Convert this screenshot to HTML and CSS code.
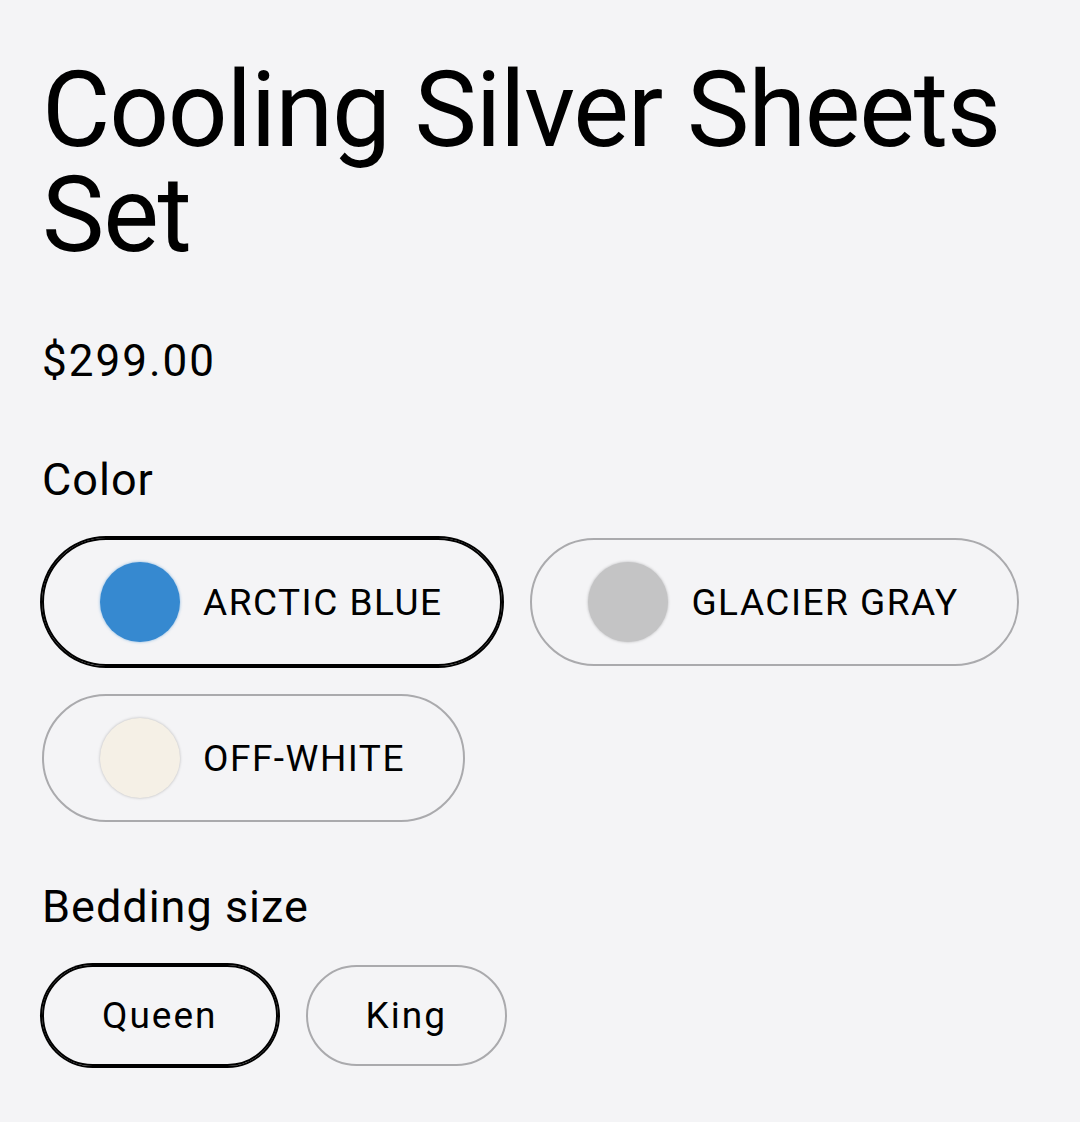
FILE: index.html
```html
<!DOCTYPE html>
<html lang="en">
<head>
    <meta charset="UTF-8">
    <meta name="viewport" content="width=device-width, initial-scale=1.0">
    <title>Cooling Silver Sheets Set</title>
    <link rel="stylesheet" href="styles.css">
</head>
<body>
    <div class="product">
        <h1 class="product-title">Cooling Silver Sheets Set</h1>
        <p class="price">$299.00</p>

        <div class="option-group">
            <div class="option-label">Color</div>
            <div class="option-list">
                <button class="pill color-pill selected">
                    <span class="swatch swatch-blue"></span>
                    <span class="pill-text">ARCTIC BLUE</span>
                </button>
                <button class="pill color-pill">
                    <span class="swatch swatch-gray"></span>
                    <span class="pill-text">GLACIER GRAY</span>
                </button>
                <button class="pill color-pill">
                    <span class="swatch swatch-white"></span>
                    <span class="pill-text">OFF-WHITE</span>
                </button>
            </div>
        </div>

        <div class="option-group size-group">
            <div class="option-label">Bedding size</div>
            <div class="option-list">
                <button class="pill size-pill selected">Queen</button>
                <button class="pill size-pill">King</button>
            </div>
        </div>
    </div>
</body>
</html>
```

FILE: styles.css
```css
body {
    margin: 0;
    background-color: #f4f4f6;
    font-family: Roboto, 'Noto Sans', sans-serif;
    color: #000;
}
.product {
    padding: 58px 42px 40px;
}
.product-title {
    margin: 0;
    font-size: 105px;
    line-height: 105px;
    font-weight: 400;
    letter-spacing: -1.2px;
}
.price {
    margin: 67px 0 0;
    font-size: 44px;
    line-height: 52px;
    letter-spacing: 2px;
}
.option-group {
    margin-top: 67px;
}
.size-group {
    margin-top: 59px;
}
.option-label {
    font-size: 45px;
    line-height: 52px;
    letter-spacing: 1px;
    margin-bottom: 32px;
}
.option-list {
    display: flex;
    flex-wrap: wrap;
    gap: 28px;
}
.pill {
    display: flex;
    align-items: center;
    font-family: inherit;
    color: #000;
    background: transparent;
    border: 2px solid #aaaaad;
    border-radius: 999px;
    cursor: pointer;
}
.pill.selected {
    border-color: #000;
    box-shadow: 0 0 0 2px #000;
}
.color-pill {
    height: 128px;
    padding: 0 58px 0 56px;
    gap: 23px;
}
.pill-text {
    font-size: 37px;
    letter-spacing: 1.5px;
}
.swatch {
    width: 80px;
    height: 80px;
    border-radius: 50%;
    box-shadow: 0 0 3px rgba(0, 0, 0, 0.25);
}
.swatch-blue {
    background: #3689d0;
    box-shadow: 0 0 3px rgba(54, 137, 208, 0.6);
}
.swatch-gray {
    background: #c4c4c5;
}
.swatch-white {
    background: #f5f0e6;
}
.size-pill {
    height: 101px;
    padding: 0 58px;
    font-size: 37px;
    letter-spacing: 2px;
}
```
